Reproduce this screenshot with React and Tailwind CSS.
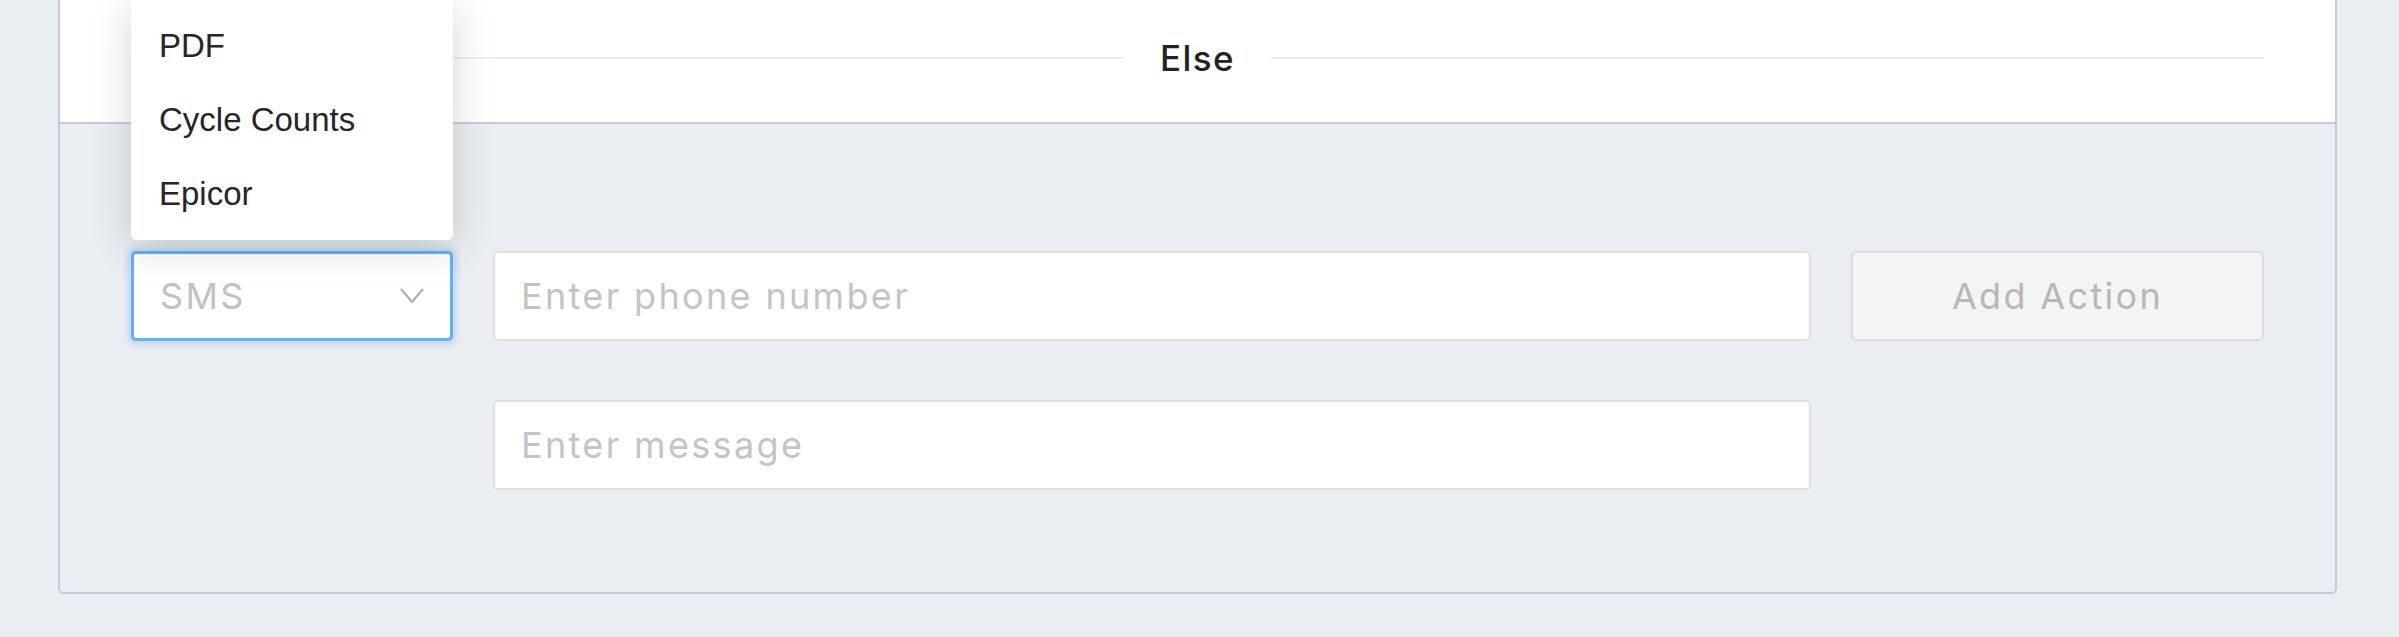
import React from 'react'

const menuItems = ['PDF', 'Cycle Counts', 'Epicor']

const field = "font-['Inter',sans-serif] text-[36px] tracking-[0.065em]"

function Chevron() {
  return (
    <svg width="24" height="16" viewBox="0 0 24 16" fill="none" className="shrink-0">
      <path d="M1.5 1.5 L12 14 L22.5 1.5" stroke="#adadad" strokeWidth="2" strokeLinecap="round" strokeLinejoin="round" />
    </svg>
  )
}

export default function App() {
  return (
    <div className="w-full h-[637px] bg-[#eaedf2] pl-[58px] overflow-hidden">
      <div className="relative w-[2279px] h-[594px] border-x-2 border-b-2 border-[#c6c7db] rounded-b-[6px]">
        {/* Else header */}
        <div className="h-[124px] bg-white border-b-2 border-[#c8c9dc] px-[71px]">
          <div className="h-[116px] flex items-center">
            <div className="flex-1 h-[2px] bg-[#efefef]" />
            <span className="px-[36px] text-[35px] font-medium tracking-[0.04em] text-[#232323] font-['Inter',sans-serif]">Else</span>
            <div className="flex-1 h-[2px] bg-[#efefef]" />
          </div>
        </div>

        {/* action rows */}
        <div className="px-[71px] pt-[127px] grid grid-cols-[322px_1fr_413px] gap-x-[40px] gap-y-[59px]">
          <div className="h-[90px] flex items-center justify-between pl-[26px] pr-[26px] bg-white border-[3px] border-[#6aaef2] rounded-[5px] shadow-[0_0_5px_4px_rgba(110,175,240,0.3)]">
            <span className={`${field} text-[#c2c2c2]`}>SMS</span>
            <Chevron />
          </div>
          <input
            className={`h-[90px] px-[26px] bg-white border-2 border-[#dfdfdf] rounded-[5px] outline-none text-[#333] placeholder:text-[#c4c4c4] ${field}`}
            placeholder="Enter phone number"
          />
          <button className={`h-[90px] bg-[#f4f4f4] border-2 border-[#dcdcdc] rounded-[5px] text-[#b7b7b7] ${field}`}>
            Add Action
          </button>
          <div />
          <input
            className={`h-[90px] px-[26px] bg-white border-2 border-[#dfdfdf] rounded-[5px] outline-none text-[#333] placeholder:text-[#c4c4c4] ${field}`}
            placeholder="Enter message"
          />
          <div />
        </div>

        {/* open dropdown menu */}
        <div className="absolute left-[71px] top-0 w-[322px] h-[240px] bg-white rounded-b-[6px] shadow-[0_8px_40px_rgba(0,0,0,0.17)] pt-[9px]">
          {menuItems.map(item => (
            <div key={item} className="h-[74px] flex items-center pl-[28px] text-[33px] text-[#262626] font-['Liberation_Sans',Arial,sans-serif]">
              {item}
            </div>
          ))}
        </div>
      </div>
    </div>
  )
}
